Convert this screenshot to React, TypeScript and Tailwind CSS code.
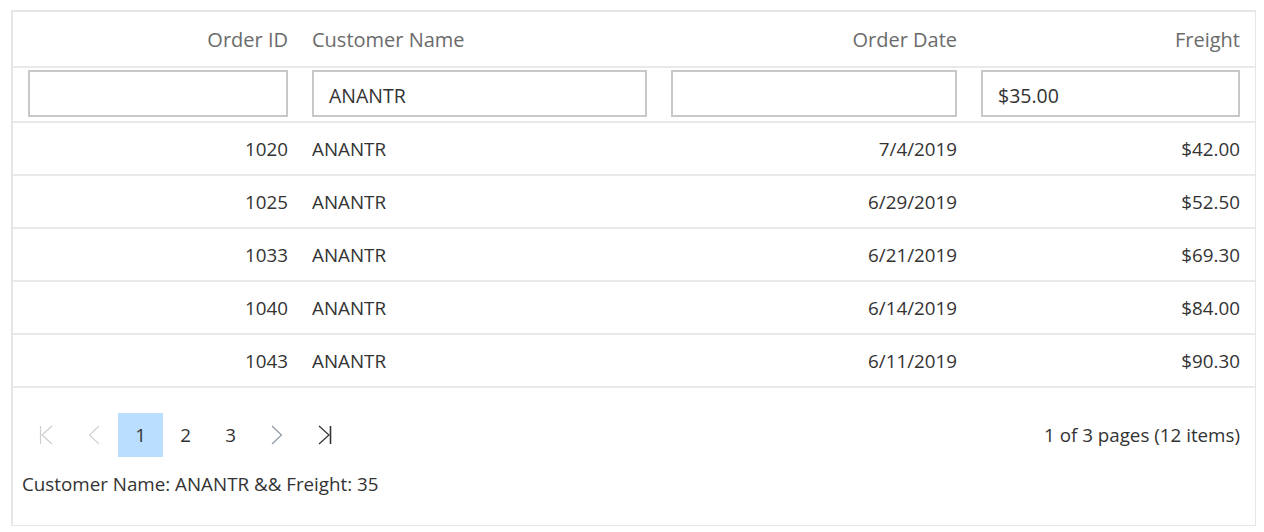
import React from "react";

const rows = [
  { id: "1020", name: "ANANTR", date: "7/4/2019", freight: "$42.00" },
  { id: "1025", name: "ANANTR", date: "6/29/2019", freight: "$52.50" },
  { id: "1033", name: "ANANTR", date: "6/21/2019", freight: "$69.30" },
  { id: "1040", name: "ANANTR", date: "6/14/2019", freight: "$84.00" },
  { id: "1043", name: "ANANTR", date: "6/11/2019", freight: "$90.30" },
];

const grid = "grid grid-cols-[283px_359px_310px_283px]";

function FirstIcon({ color }: { color: string }) {
  return (
    <svg width="14" height="20" viewBox="0 0 14 20" fill="none" stroke={color} strokeWidth="1.2">
      <line x1="1.5" y1="1" x2="1.5" y2="19" />
      <polyline points="13,1 3,10 13,19" />
    </svg>
  );
}
function PrevIcon({ color }: { color: string }) {
  return (
    <svg width="12" height="20" viewBox="0 0 12 20" fill="none" stroke={color} strokeWidth="1.2">
      <polyline points="11,1 1.5,10 11,19" />
    </svg>
  );
}
function NextIcon({ color }: { color: string }) {
  return (
    <svg width="12" height="20" viewBox="0 0 12 20" fill="none" stroke={color} strokeWidth="1.2">
      <polyline points="1,1 10.5,10 1,19" />
    </svg>
  );
}
function LastIcon({ color }: { color: string }) {
  return (
    <svg width="14" height="20" viewBox="0 0 14 20" fill="none" stroke={color} strokeWidth="1.2">
      <polyline points="1,1 11,10 1,19" />
      <line x1="12.5" y1="1" x2="12.5" y2="19" strokeWidth="1.6" />
    </svg>
  );
}

export default function App() {
  return (
    <div className="bg-white w-[1264px] h-[532px] pt-[10px] pl-[11px]" style={{ fontFamily: '"Open Sans", "Noto Sans", sans-serif' }}>
      <div className="w-[1245px] h-[516px] border-l-2 border-t-2 border-r border-b border-[#e6e6e6] flex flex-col text-[#333333]">
        {/* header */}
        <div className={`${grid} h-[56px] border-b-2 border-[#e9e9e9] text-[20px] text-[#6b6b6b] items-center pt-[1px]`}>
          <div className="text-right pr-[8px]">Order ID</div>
          <div className="pl-[16px]">Customer Name</div>
          <div className="text-right pr-[8px]">Order Date</div>
          <div className="text-right pr-[8px]">Freight</div>
        </div>
        {/* filter */}
        <div className={`${grid} h-[55px] border-b-2 border-[#e9e9e9] pt-[2px]`}>
          <div className="pl-[15px] pr-[8px]">
            <div className="h-[47px] border-2 border-[#c8c8c8]" />
          </div>
          <div className="pl-[16px] pr-[8px]">
            <div className="h-[47px] border-2 border-[#c8c8c8] flex items-center pl-[15px] pt-[5px] text-[19.5px] text-[#333]">ANANTR</div>
          </div>
          <div className="pl-[16px] pr-[8px]">
            <div className="h-[47px] border-2 border-[#c8c8c8]" />
          </div>
          <div className="pl-[16px] pr-[8px]">
            <div className="h-[47px] border-2 border-[#c8c8c8] flex items-center pl-[15px] pt-[5px] text-[19.5px] text-[#333]">$35.00</div>
          </div>
        </div>
        {/* rows */}
        {rows.map((r) => (
          <div key={r.id} className={`${grid} h-[53px] border-b-2 border-[#e9e9e9] items-center text-[18.8px] pt-[1px]`}>
            <div className="text-right pr-[8px]">{r.id}</div>
            <div className="pl-[16px]">{r.name}</div>
            <div className="text-right pr-[8px]">{r.date}</div>
            <div className="text-right pr-[8px]">{r.freight}</div>
          </div>
        ))}
        {/* pager */}
        <div className="flex-1 flex flex-col pt-[25px] pl-[9px] pr-[15px]">
          <div className="flex items-center h-[44px] text-[18.8px]">
            <div className="w-[45px] h-[44px] flex items-center justify-center mr-[3px] ml-[1px]">
              <FirstIcon color="#cfcfcf" />
            </div>
            <div className="w-[45px] h-[44px] flex items-center justify-center mr-[2px]">
              <PrevIcon color="#d2d2d2" />
            </div>
            <div className="w-[45px] h-[44px] flex items-center justify-center bg-[#b9defe]">1</div>
            <div className="w-[45px] h-[44px] flex items-center justify-center">2</div>
            <div className="w-[45px] h-[44px] flex items-center justify-center">3</div>
            <div className="w-[45px] h-[44px] flex items-center justify-center ml-[1px] mr-[3px]">
              <NextIcon color="#8f9aa6" />
            </div>
            <div className="w-[45px] h-[44px] flex items-center justify-center">
              <LastIcon color="#333333" />
            </div>
            <div className="ml-auto">1 of 3 pages (12 items)</div>
          </div>
          <div className="mt-[15px] leading-[24px] text-[18.8px]">Customer Name: ANANTR &amp;&amp; Freight: 35</div>
        </div>
      </div>
    </div>
  );
}
